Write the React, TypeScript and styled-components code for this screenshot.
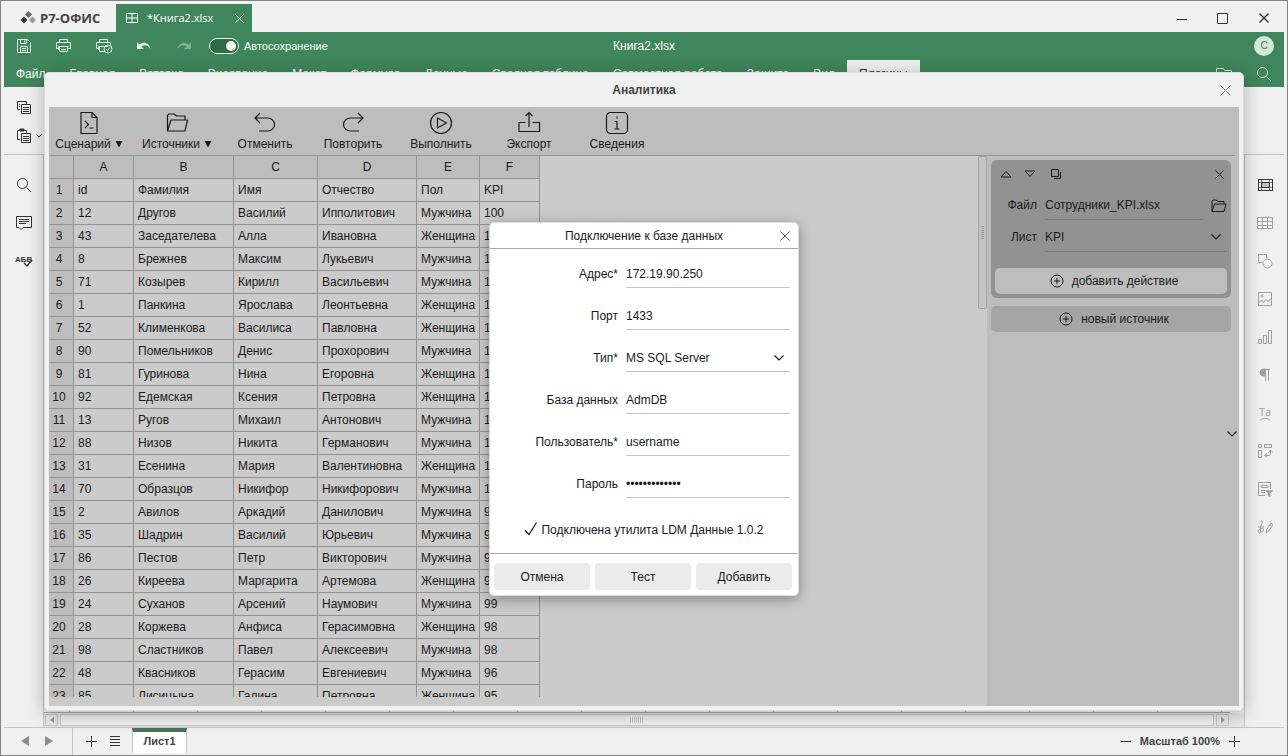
import React from "react";
import styled, { createGlobalStyle } from "styled-components";

const GlobalStyle = createGlobalStyle`
  *, *::before, *::after { box-sizing: border-box; }
  body { margin: 0; background: #f0f0f0; }
  body, button, input, select, table {
    font-family: "Liberation Sans", Arial, sans-serif;
    font-size: 12px;
    line-height: 16px;
    color: #1a1a1a;
  }
  button, input, select { margin: 0; padding: 0; border: 0; background: none; outline: none; border-radius: 0; }
  button { cursor: pointer; display: flex; align-items: center; justify-content: center; white-space: nowrap; }
  svg { display: block; flex: none; }
`;

/* ---------- window ---------- */

const Window = styled.div`
  position: relative;
  display: flex;
  flex-direction: column;
  min-height: 100vh;
  padding: 3px 3px 0;
  border: 1px solid #848484;
  background: #f0f0f0;
`;

const TitleBar = styled.header`
  display: flex;
  height: 28px;
`;

const Brand = styled.div`
  display: flex;
  align-items: center;
  gap: 3px;
  width: 112px;
  padding-left: 16px;
  font: 700 13px/20px "Open Sans", sans-serif;
  color: #444;
`;

const FileTab = styled.div`
  display: flex;
  align-items: center;
  gap: 9px;
  width: 136px;
  padding: 0 8px 0 10px;
  background: #40865c;
  color: #fff;
  font: 400 11px/16px "Open Sans", sans-serif;
  span { flex: 1; }
`;

const TabClose = styled.button`
  width: 10px;
  height: 20px;
  color: #fff;
`;

const WindowControls = styled.div`
  display: flex;
  margin-left: auto;
`;

const WindowButton = styled.button`
  width: 41px;
  height: 28px;
  color: #333;
`;

/* ---------- green header ---------- */

const Header = styled.div`
  background: #40865c;
  color: #fff;
`;

const QuickBar = styled.div`
  display: grid;
  grid-template-columns: 1fr auto 1fr;
  align-items: center;
  height: 28px;
`;

const QuickActions = styled.div`
  display: flex;
  align-items: center;
`;

const QuickButton = styled.button<{ $dim?: boolean }>`
  width: 40px;
  height: 28px;
  color: #e6f3ea;
  opacity: ${(p) => (p.$dim ? 0.4 : 1)};
`;

const AutoSave = styled.label`
  display: flex;
  align-items: center;
  gap: 5px;
  margin-left: 5px;
  font-size: 11px;
`;

const Toggle = styled.input`
  appearance: none;
  display: flex;
  justify-content: flex-end;
  align-items: center;
  width: 30px;
  height: 16px;
  padding: 0 2px;
  border: 1px solid #e6f3ea;
  border-radius: 8px;
  background: #2f6a46;
  &::after {
    content: "";
    width: 10px;
    height: 10px;
    border-radius: 50%;
    background: #eef7f0;
  }
`;

const Avatar = styled.button`
  justify-self: end;
  width: 20px;
  height: 20px;
  margin-right: 10px;
  border-radius: 50%;
  background: #d3e8da;
  color: #40765a;
  font-size: 10px;
`;

const MenuBar = styled.nav`
  display: flex;
  height: 27px;
`;

const MenuTab = styled.button<{ $active?: boolean }>`
  height: 27px;
  padding: 0 12px;
  color: ${(p) => (p.$active ? "#333" : "#fff")};
  background: ${(p) => (p.$active ? "#f0f0f0" : "transparent")};
`;

const MenuTools = styled.div`
  display: flex;
  margin-left: auto;
  button { width: 40px; color: #d3e8da; }
`;

/* ---------- editor behind the dialog ---------- */

const Ribbon = styled.div`
  display: flex;
  flex-direction: column;
  height: 68px;
  padding-top: 7px;
  border-bottom: 1px solid #c4c4c4;
`;

const RibbonButton = styled.button`
  justify-content: flex-start;
  gap: 4px;
  width: 40px;
  height: 28px;
  padding-left: 12px;
  color: #333;
`;

const Workspace = styled.div`
  display: flex;
  flex: 1;
  min-height: 0;
`;

const Rail = styled.div<{ $side: "left" | "right" }>`
  display: flex;
  flex-direction: column;
  width: 40px;
  padding-top: 11px;
  border: 0 solid #c4c4c4;
  border-width: ${(p) => (p.$side === "left" ? "0 1px 0 0" : "0 0 0 1px")};
`;

const RailButton = styled.button<{ $dim?: boolean }>`
  height: 38px;
  color: ${(p) => (p.$dim ? "#a0a0a0" : "#333")};
`;

const Canvas = styled.div`
  display: flex;
  flex: 1;
  flex-direction: column;
  min-width: 0;
`;

const Cells = styled.div`
  flex: 1;
  margin-right: 14px;
  border-bottom: 1px solid #a8a8a8;
  background: repeating-linear-gradient(to right, transparent 0 25px, #a8a8a8 25px 26px, transparent 26px 64px);
`;

const ScrollRow = styled.div`
  display: flex;
  gap: 2px;
  height: 14px;
  padding: 1px 15px 0 1px;
  background: #e8e8e8;
`;

const ScrollArrow = styled.button`
  width: 13px;
  height: 12px;
  border: 1px solid #c4c4c4;
  color: #999;
`;

const ScrollThumb = styled.div`
  display: flex;
  flex: 1;
  align-items: center;
  justify-content: center;
  height: 12px;
  border: 1px solid #c4c4c4;
  background: #f0f0f0;
`;

const StatusBar = styled.footer`
  display: flex;
  height: 28px;
  border-top: 1px solid #c4c4c4;
  color: #444;
  font-size: 11px;
  font-weight: 700;
`;

const StatusButton = styled.button<{ $muted?: boolean }>`
  width: 24px;
  height: 26px;
  color: ${(p) => (p.$muted ? "#8c8c8c" : "#333")};
`;

const SheetNav = styled.div`
  display: flex;
  width: 69px;
  padding-left: 9px;
  border-right: 1px solid #c4c4c4;
`;

const SheetTools = styled.div`
  display: flex;
  width: 59px;
  padding-left: 6px;
`;

const SheetTab = styled.button`
  width: 55px;
  height: 25px;
  padding-bottom: 4px;
  border: 1px solid #c4c4c4;
  border-top: 4px solid #4a7359;
  border-bottom: 0;
  background: #fff;
  color: #444;
  font-size: 11px;
  font-weight: 700;
`;

const Zoom = styled.div`
  display: flex;
  align-items: center;
  gap: 2px;
  height: 26px;
  margin-left: auto;
  padding-right: 38px;
`;

/* ---------- analytics dialog ---------- */

const Dialog = styled.section`
  position: absolute;
  inset: 71px 43px 44px;
  display: flex;
  flex-direction: column;
  padding: 0 4px 4px;
  border: 1px solid #dcdcdc;
  border-radius: 5px;
  background: #f0f0f0;
  box-shadow: 0 3px 18px rgba(0, 0, 0, 0.28);
`;

const DialogHeader = styled.header`
  display: grid;
  grid-template-columns: 1fr auto 1fr;
  align-items: center;
  height: 34px;
  font-size: 12px;
  color: #444;
  h1 { margin: 0; font-size: 12px; line-height: 16px; }
  button { justify-self: end; width: 28px; height: 28px; color: #888; }
`;

const DialogBody = styled.div`
  display: flex;
  flex: 1;
  flex-direction: column;
  min-height: 0;
  background: #bdbdbd;
`;

const Toolbar = styled.div`
  display: flex;
  height: 49px;
  margin-right: 4px;
  border-bottom: 1px solid #929292;
`;

const ToolButton = styled.button`
  flex-direction: column;
  justify-content: flex-start;
  gap: 1px;
  width: 88px;
  padding-top: 4px;
  &:first-child { width: 80px; margin-right: 4px; }
`;

const ToolLabel = styled.span`
  display: flex;
  align-items: center;
  gap: 4px;
`;

const Split = styled.div`
  display: flex;
  flex: 1;
  min-height: 0;
`;

const Sheet = styled.div`
  display: flex;
  flex: 1;
  justify-content: space-between;
  align-items: flex-start;
  min-width: 0;
  background: #cbcbcb;
`;

const TableClip = styled.div`
  height: calc(100% - 9px);
  overflow: hidden;
`;

const Table = styled.table`
  table-layout: fixed;
  width: 491px;
  border-collapse: separate;
  border-spacing: 0;
  th, td {
    height: 23px;
    border-right: 1px solid #929292;
    border-bottom: 1px solid #929292;
    white-space: nowrap;
  }
  th { padding: 0; background: #bdbdbd; font-weight: 400; text-align: center; }
  tbody th { padding-right: 4px; }
  td { padding: 0 4px; }
`;

const VScroll = styled.div`
  display: flex;
  align-items: center;
  justify-content: center;
  width: 9px;
  height: 153px;
  border: 1px solid #a5a5a5;
  border-radius: 2px;
  background: #c4c4c4;
`;

const SidePanel = styled.aside`
  position: relative;
  display: flex;
  flex-direction: column;
  gap: 8px;
  width: 252px;
  padding: 4px 8px 0 4px;
`;

const SourceCard = styled.div`
  padding: 0 4px 4px;
  border-radius: 6px;
  background: #929292;
`;

const CardTools = styled.div`
  display: flex;
  align-items: center;
  height: 28px;
  button { width: 26px; height: 24px; }
  button:first-child { width: 22px; }
  button:last-child { margin-left: auto; width: 16px; }
`;

const CardField = styled.div`
  display: flex;
  align-items: center;
  gap: 8px;
  height: 32px;
  label { width: 42px; padding-top: 2px; text-align: right; }
  button { width: 16px; height: 20px; padding-top: 4px; }
`;

const Underlined = styled.div<{ $line: string }>`
  position: relative;
  display: flex;
  flex: 1;
  align-items: center;
  align-self: stretch;
  min-width: 0;
  padding-top: 2px;
  border-bottom: 1px solid ${(p) => p.$line};
  input, select { appearance: none; flex: 1; width: 100%; min-width: 0; height: 20px; background: transparent; }
  svg { position: absolute; right: 6px; pointer-events: none; }
`;

const PanelButton = styled.button<{ $tone: string }>`
  gap: 8px;
  width: 100%;
  height: 26px;
  padding-left: 6px;
  border-radius: 5px;
  background: ${(p) => p.$tone};
`;

const AddAction = styled(PanelButton)`
  margin-top: 16px;
`;

const PanelToggle = styled.button`
  position: absolute;
  right: 0;
  top: calc(50% - 4px);
  width: 14px;
  height: 14px;
`;

/* ---------- connection modal ---------- */

const Modal = styled.form`
  position: absolute;
  top: 221px;
  left: 50%;
  width: 310px;
  margin-left: -155px;
  border: 1px solid #dcdcdc;
  border-radius: 5px;
  background: #fff;
  box-shadow: 0 3px 14px rgba(0, 0, 0, 0.35);
`;

const ModalHeader = styled.header`
  display: grid;
  grid-template-columns: 26px 1fr 26px;
  align-items: center;
  height: 26px;
  border-bottom: 1px solid #a8a8a8;
  text-align: center;
  h2 { margin: 0; font-size: 12px; font-weight: 400; line-height: 16px; }
  button { height: 24px; color: #555; }
`;

const Fields = styled.div`
  display: flex;
  flex-direction: column;
  gap: 13px;
  padding: 10px 8px 0;
`;

const Field = styled.div`
  display: flex;
  align-items: center;
  gap: 8px;
  height: 29px;
  label { width: 120px; text-align: right; white-space: nowrap; }
`;

const Status = styled.p`
  display: flex;
  align-items: center;
  justify-content: center;
  gap: 3px;
  height: 56px;
  margin: 0;
  padding-top: 8px;
  border-bottom: 1px solid #a8a8a8;
`;

const ModalActions = styled.div`
  display: grid;
  grid-template-columns: repeat(3, 1fr);
  gap: 5px;
  padding: 9px 6px 5px 4px;
  button { height: 27px; border-radius: 4px; background: #ebebeb; }
`;

/* ---------- icons ---------- */

type IconProps = { w?: number; h?: number; sw?: number; children: React.ReactNode };
const Icon = ({ w = 16, h = 16, sw = 1, children }: IconProps) => (
  <svg width={w} height={h} viewBox={`0 0 ${w} ${h}`} fill="none" stroke="currentColor" strokeWidth={sw} aria-hidden="true">
    {children}
  </svg>
);

const Cross = ({ size = 10, sw = 1 }: { size?: number; sw?: number }) => (
  <Icon w={size} h={size} sw={sw}>
    <path d={`M.5 .5L${size - 0.5} ${size - 0.5}M${size - 0.5} .5L.5 ${size - 0.5}`} />
  </Icon>
);
const Chevron = ({ w = 10, sw = 1.2 }: { w?: number; sw?: number }) => (
  <Icon w={w} h={6} sw={sw}>
    <path d={w > 8 ? "M.5 .5L5 5 9.500 .5" : "M.5 1.500L3 4 5.500 1.500"} />
  </Icon>
);
const Magnifier = () => (
  <Icon>
    <circle cx="6.5" cy="6.5" r="5" />
    <path d="M10.500 10.500L15 15" />
  </Icon>
);
const PlusCircle = () => (
  <Icon w={14} h={14}>
    <circle cx="7" cy="7" r="6" />
    <path d="M4 7h6M7 4v6" />
  </Icon>
);
const Triangle = () => (
  <svg width="8" height="7" viewBox="0 0 8 7" aria-hidden="true">
    <path d="M0.500 0H7.500L4 6.500Z" fill="currentColor" />
  </svg>
);
const Printer = ({ checked }: { checked?: boolean }) => (
  <Icon w={18} h={16}>
    <path d="M4.500 4V1.500h8V4M3.500 10.500H1.500V4.500h14v3M3.500 12V8.500h10M4.500 8.500v5h5" />
    {checked ? (
      <>
        <circle cx="13" cy="11" r="4" />
        <path d="M11 11l1.500 1.500L15 9.500" />
      </>
    ) : (
      <path d="M9 13.500h3.500v-5M15.500 7v3.500h-2M6 11.500h5" />
    )}
  </Icon>
);

/* ---------- data ---------- */

const menu = ["Файл", "Главная", "Вставка", "Рисование", "Макет", "Формула", "Данные", "Сводная таблица", "Совместная работа", "Защита", "Вид"];

const columns = [
  { name: "", width: 25 },
  { name: "A", width: 60 },
  { name: "B", width: 100 },
  { name: "C", width: 84 },
  { name: "D", width: 99 },
  { name: "E", width: 63 },
  { name: "F", width: 60 },
];

const rows = [
  "id|Фамилия|Имя|Отчество|Пол|KPI",
  "12|Другов|Василий|Ипполитович|Мужчина|100",
  "43|Заседателева|Алла|Ивановна|Женщина|100",
  "8|Брежнев|Максим|Лукьевич|Мужчина|100",
  "71|Козырев|Кирилл|Васильевич|Мужчина|100",
  "1|Панкина|Ярослава|Леонтьевна|Женщина|100",
  "52|Клименкова|Василиса|Павловна|Женщина|100",
  "90|Помельников|Денис|Прохорович|Мужчина|100",
  "81|Гуринова|Нина|Егоровна|Женщина|100",
  "92|Едемская|Ксения|Петровна|Женщина|100",
  "13|Ругов|Михаил|Антонович|Мужчина|100",
  "88|Низов|Никита|Германович|Мужчина|100",
  "31|Есенина|Мария|Валентиновна|Женщина|100",
  "70|Образцов|Никифор|Никифорович|Мужчина|100",
  "2|Авилов|Аркадий|Данилович|Мужчина|99",
  "35|Шадрин|Василий|Юрьевич|Мужчина|99",
  "86|Пестов|Петр|Викторович|Мужчина|99",
  "26|Киреева|Маргарита|Артемова|Женщина|99",
  "24|Суханов|Арсений|Наумович|Мужчина|99",
  "28|Коржева|Анфиса|Герасимовна|Женщина|98",
  "98|Сластников|Павел|Алексеевич|Мужчина|98",
  "48|Квасников|Герасим|Евгениевич|Мужчина|96",
  "85|Лисицына|Галина|Петровна|Женщина|95",
].map((r) => r.split("|"));

const tools = [
  {
    label: "Сценарий",
    menu: true,
    icon: (
      <Icon w={24} h={24} sw={1.2}>
        <path d="M4 1.500h11l5 5v16H4zM15 1.500v5h5M8 10l3.500 3.500L8 17M12.500 17h4" />
      </Icon>
    ),
  },
  {
    label: "Источники",
    menu: true,
    icon: (
      <Icon w={24} h={24} sw={1.2}>
        <path d="M2.500 20V4.500L4 3h5l2.500 2H20v4M2.500 20L6 9h16.500L20 20z" strokeLinejoin="round" />
      </Icon>
    ),
  },
  {
    label: "Отменить",
    icon: (
      <Icon w={24} h={24} sw={1.2}>
        <path d="M7 2L2 7l5 5M2 7h12.500a7 6.500 0 0 1 0 13H6" />
      </Icon>
    ),
  },
  {
    label: "Повторить",
    icon: (
      <Icon w={24} h={24} sw={1.2}>
        <path d="M17 2l5 5-5 5M22 7H9.500a7 6.500 0 0 0 0 13H18" />
      </Icon>
    ),
  },
  {
    label: "Выполнить",
    icon: (
      <Icon w={24} h={24} sw={1.2}>
        <circle cx="12" cy="12" r="10.500" />
        <path d="M8.500 7v10l9-5z" strokeLinejoin="round" />
      </Icon>
    ),
  },
  {
    label: "Экспорт",
    icon: (
      <Icon w={24} h={24} sw={1.2}>
        <path d="M8.500 11.500h-6.500v9h20.500v-9h-7M12 16V2M8.500 5L12 1.500 15.500 5" />
      </Icon>
    ),
  },
  {
    label: "Сведения",
    icon: (
      <Icon w={24} h={24} sw={1.2}>
        <rect x="1.500" y="1.500" width="21" height="21" rx="4" />
        <path d="M12 5.500v2M9.500 10.500H12V18M9.500 18h5" />
      </Icon>
    ),
  },
];

const sideTools: { name: string; active?: boolean; icon: React.ReactNode }[] = [
  { name: "Параметры ячейки", active: true, icon: <><path d="M1.500 2.500h14v11h-14zM4.500 2.500v11M12.500 2.500v11M1.500 5.500h14M1.500 10.500h14" strokeOpacity="0.6" /><path d="M1.500 2.500h14v11h-14z" /><rect x="4.500" y="5.500" width="8" height="5" fill="#bdbdbd" /></> },
  { name: "Таблица", icon: <path d="M.5 2.500h15v11H.5zM.5 6.500h15M.5 10.500h15M5.500 2.500v11M10.500 2.500v11" /> },
  { name: "Фигура", icon: <><path d="M5 9.500H1.500v-8h8V5" /><circle cx="10.500" cy="10.500" r="4.500" /></> },
  { name: "Изображение", icon: <><path d="M1.500 1.500h13v13h-13zM1.500 12l3-3 2 2.500 2.500-3 2 2 3.500-3.500" /><circle cx="5" cy="5" r="1" /></> },
  { name: "Диаграмма", icon: <path d="M1.500 10.500h3v4h-3zM6.500 6.500h3v8h-3zM11.500 1.500h3v13h-3z" /> },
  { name: "Абзац", icon: <><path d="M8.500 2v12M11.500 2v12M6 2.500h7" /><path d="M8.500 2H6.500a3.500 3.500 0 0 0 0 7h2z" fill="currentColor" /></> },
  { name: "Текст", icon: <><text x="8" y="11" textAnchor="middle" fontSize="11" fontFamily="Open Sans, sans-serif" fill="currentColor" stroke="none">Ta</text><path d="M3 15.500c3-3 7-3 10 0" /></> },
  { name: "Сводная таблица", icon: <><path d="M1.500 1.500h3v3h-3zM7.500 1.500h7v3h-7zM1.500 7.500h3v7h-3z" /><path d="M8 12.500h3.500a2 2 0 0 0 2-2V8M10 10.500l-2.500 2L10 14.500M11.500 9.500l2-2.500 2 2.500" /></> },
  { name: "Срез", icon: <><path d="M8 14.500H1.500v-13h12V8M4 4.500h7v2H4zM4 9.500h4M4 11.500h4" /><path d="M8 9.500h8l-3 3v3.500l-2-1.500v-2z" fill="currentColor" strokeWidth="0.5" /></> },
  { name: "Подпись", icon: <path d="M3.500 2.500c2-2 2.500 1 0 5v5c0 3-3 1-2-1s5-3 5-1-2 4-2 2M1 8h6M9 14l1-4 4-6 2 1.500-4 6zM12.500 6l2 1.500" /> },
];

const connection = [
  { id: "address", label: "Адрес*", value: "172.19.90.250" },
  { id: "port", label: "Порт", value: "1433" },
  { id: "type", label: "Тип*", value: "MS SQL Server", select: true },
  { id: "database", label: "База данных", value: "AdmDB" },
  { id: "user", label: "Пользователь*", value: "username" },
  { id: "password", label: "Пароль", value: "password12345", secret: true },
];

/* ---------- page ---------- */

export default function App() {
  return (
    <>
      <GlobalStyle />
      <Window>
        <TitleBar>
          <Brand>
            <svg width="17" height="14" viewBox="0 0 17 14" aria-hidden="true">
              <path d="M8.500 0L12 3.500 8.500 7 5 3.500z" fill="#666" />
              <path d="M4 5.500L7.500 9 4 12.500.5 9z" fill="#333" />
              <path d="M12.500 5.500L16 9l-3.500 3.500L9 9z" fill="#999" />
            </svg>
            Р7-ОФИС
          </Brand>
          <FileTab>
            <Icon w={12} h={10} sw={1}>
              <path d="M.5 .5h11v9H.5zM6 .5v9M.5 5h11" />
            </Icon>
            <span>*Книга2.xlsx</span>
            <TabClose aria-label="Закрыть вкладку"><Cross size={9} /></TabClose>
          </FileTab>
          <WindowControls>
            <WindowButton aria-label="Свернуть"><Icon w={10} h={10}><path d="M0 6.500h10" /></Icon></WindowButton>
            <WindowButton aria-label="Развернуть"><Icon w={11} h={11}><path d="M.5 .5h10v10H.5z" /></Icon></WindowButton>
            <WindowButton aria-label="Закрыть"><Cross sw={1.4} /></WindowButton>
          </WindowControls>
        </TitleBar>

        <Header>
          <QuickBar>
            <QuickActions>
              <QuickButton aria-label="Сохранить">
                <Icon w={14} h={14}><path d="M.5 .5h10l3 3v10H.5zM3.500 .5v4h6v-4M3.500 13.500v-6h7v6M5 9.500h4M5 11.500h4M7.500 1.500v2" /></Icon>
              </QuickButton>
              <QuickButton aria-label="Печать"><Printer /></QuickButton>
              <QuickButton aria-label="Быстрая печать"><Printer checked /></QuickButton>
              <QuickButton aria-label="Отменить">
                <Icon w={16} h={12}><path d="M1 2v7h7L5.500 6.500C8 4.500 12 5 14.500 9 13.500 3 7.500 1 3.500 4.500z" fill="currentColor" stroke="none" /></Icon>
              </QuickButton>
              <QuickButton aria-label="Повторить" $dim>
                <Icon w={16} h={12}><path d="M15 2v7H8l2.500-2.500C8 4.500 4 5 1.500 9 2.500 3 8.500 1 12.500 4.500z" fill="currentColor" stroke="none" /></Icon>
              </QuickButton>
              <AutoSave>
                <Toggle type="checkbox" role="switch" defaultChecked />
                Автосохранение
              </AutoSave>
            </QuickActions>
            <span>Книга2.xlsx</span>
            <Avatar aria-label="Пользователь">C</Avatar>
          </QuickBar>
          <MenuBar>
            {menu.map((m) => <MenuTab key={m}>{m}</MenuTab>)}
            <MenuTab $active>Плагины</MenuTab>
            <MenuTools>
              <button aria-label="Открыть расположение файла"><Icon><path d="M.5 14V2.500h7l1 2h7V14z" /></Icon></button>
              <button aria-label="Найти"><Magnifier /></button>
            </MenuTools>
          </MenuBar>
        </Header>

        <Ribbon>
          <RibbonButton aria-label="Копировать">
            <Icon><path d="M4 9.500H1.500v-8h9V4M3 4.500h1M3 6.500h1M5.500 4.500h9v9h-9zM7 7.500h6M7 9.500h6M7 11.500h6" /></Icon>
          </RibbonButton>
          <RibbonButton aria-label="Вставить">
            <Icon><path d="M4 11.500H1.500v-9h9V5M5.500 5.500h9v9h-9zM7 8.500h6M7 10.500h6M7 12.500h6" /><path d="M4 1h4v2H4z" fill="currentColor" /></Icon>
            <Chevron w={6} sw={1} />
          </RibbonButton>
        </Ribbon>

        <Workspace>
          <Rail $side="left">
            <RailButton aria-label="Поиск"><Magnifier /></RailButton>
            <RailButton aria-label="Комментарии">
              <Icon><path d="M.5 1.500h15v11H7l-2 2-2-2H.5zM3 4.500h10M3 6.500h10M3 8.500h7" /></Icon>
            </RailButton>
            <RailButton aria-label="Проверка орфографии">
              <Icon w={18} h={16} sw={1.5}>
                <text x="0" y="9" fontSize="8" fontWeight="700" fontFamily="Liberation Sans, sans-serif" fill="currentColor" stroke="none">АБВ</text>
                <path d="M9 10l3 3 5-6" />
              </Icon>
            </RailButton>
          </Rail>
          <Canvas>
            <Cells />
            <ScrollRow>
              <ScrollArrow aria-label="Прокрутить влево"><Icon w={4} h={6}><path d="M4 0v6L0 3z" fill="currentColor" stroke="none" /></Icon></ScrollArrow>
              <ScrollThumb><Icon w={14} h={6}><path d="M.5 0v6M2.500 0v6M4.500 0v6M6.500 0v6M8.500 0v6M10.500 0v6M12.500 0v6" stroke="#c4c4c4" /></Icon></ScrollThumb>
              <ScrollArrow aria-label="Прокрутить вправо"><Icon w={4} h={6}><path d="M0 0v6l4-3z" fill="currentColor" stroke="none" /></Icon></ScrollArrow>
            </ScrollRow>
          </Canvas>
          <Rail $side="right">
            {sideTools.map((t) => (
              <RailButton key={t.name} aria-label={t.name} $dim={!t.active}><Icon>{t.icon}</Icon></RailButton>
            ))}
          </Rail>
        </Workspace>

        <StatusBar>
          <SheetNav>
            <StatusButton $muted aria-label="Предыдущий лист"><Icon w={8} h={10}><path d="M8 0v10L0 5z" fill="currentColor" stroke="none" /></Icon></StatusButton>
            <StatusButton $muted aria-label="Следующий лист"><Icon w={8} h={10}><path d="M0 0v10l8-5z" fill="currentColor" stroke="none" /></Icon></StatusButton>
          </SheetNav>
          <SheetTools>
            <StatusButton aria-label="Добавить лист"><Icon w={11} h={11}><path d="M5.500 0v11M0 5.500h11" /></Icon></StatusButton>
            <StatusButton aria-label="Список листов"><Icon w={10} h={11}><path d="M0 .5h10M0 3.500h10M0 6.500h10M0 9.500h10" /></Icon></StatusButton>
          </SheetTools>
          <SheetTab>Лист1</SheetTab>
          <Zoom>
            <StatusButton aria-label="Уменьшить"><Icon w={10} h={11}><path d="M0 5.500h10" /></Icon></StatusButton>
            Масштаб 100%
            <StatusButton aria-label="Увеличить"><Icon w={11} h={11}><path d="M5.500 0v11M0 5.500h11" /></Icon></StatusButton>
          </Zoom>
        </StatusBar>

        <Dialog aria-label="Аналитика">
          <DialogHeader>
            <span />
            <h1>Аналитика</h1>
            <button aria-label="Закрыть"><Cross size={11} /></button>
          </DialogHeader>
          <DialogBody>
            <Toolbar>
              {tools.map((t) => (
                <ToolButton key={t.label}>
                  {t.icon}
                  <ToolLabel>{t.label}{t.menu && <Triangle />}</ToolLabel>
                </ToolButton>
              ))}
            </Toolbar>
            <Split>
              <Sheet>
                <TableClip>
                  <Table>
                    <colgroup>
                      {columns.map((c) => <col key={c.name} width={c.width} />)}
                    </colgroup>
                    <thead>
                      <tr>{columns.map((c) => <th key={c.name} scope="col">{c.name}</th>)}</tr>
                    </thead>
                    <tbody>
                      {rows.map((row, i) => (
                        <tr key={i}>
                          <th scope="row">{i + 1}</th>
                          {row.map((cell, j) => <td key={j}>{cell}</td>)}
                        </tr>
                      ))}
                    </tbody>
                  </Table>
                </TableClip>
                <VScroll>
                  <Icon w={3} h={14}><path d="M0 .5h3M0 2.500h3M0 4.500h3M0 6.500h3M0 8.500h3M0 10.500h3M0 12.500h3" stroke="#999" /></Icon>
                </VScroll>
              </Sheet>
              <SidePanel>
                <SourceCard>
                  <CardTools>
                    <button aria-label="Вверх"><Icon w={12} h={8}><path d="M1 7L6 1.500 11 7z" /></Icon></button>
                    <button aria-label="Вниз"><Icon w={12} h={8}><path d="M1 1l5 5.500L11 1z" /></Icon></button>
                    <button aria-label="Дублировать"><Icon w={11} h={10}><path d="M.5 .5h7v7h-7zM3 9.500h6.500V3" /></Icon></button>
                    <button aria-label="Удалить"><Cross size={9} /></button>
                  </CardTools>
                  <CardField>
                    <label htmlFor="source-file">Файл</label>
                    <Underlined $line="#7c7c7c"><input id="source-file" defaultValue="Сотрудники_KPI.xlsx" /></Underlined>
                    <button aria-label="Выбрать файл">
                      <Icon w={16} h={14}><path d="M1 12.500V2.500L2 1h3l2 1.500h6V5M1 12.500L3.500 5H15l-2 7.500z" strokeLinejoin="round" /></Icon>
                    </button>
                  </CardField>
                  <CardField>
                    <label htmlFor="source-sheet">Лист</label>
                    <Underlined $line="#7c7c7c">
                      <select id="source-sheet" defaultValue="KPI"><option>KPI</option></select>
                      <Chevron />
                    </Underlined>
                  </CardField>
                  <AddAction $tone="#bdbdbd"><PlusCircle />добавить действие</AddAction>
                </SourceCard>
                <PanelButton $tone="#a5a5a5"><PlusCircle />новый источник</PanelButton>
                <PanelToggle aria-label="Свернуть панель"><Chevron /></PanelToggle>
              </SidePanel>
            </Split>
          </DialogBody>
        </Dialog>

        <Modal aria-label="Подключение к базе данных" onSubmit={(e) => e.preventDefault()}>
          <ModalHeader>
            <span />
            <h2>Подключение к базе данных</h2>
            <button type="button" aria-label="Закрыть"><Cross size={10} /></button>
          </ModalHeader>
          <Fields>
            {connection.map((f) => (
              <Field key={f.id}>
                <label htmlFor={f.id}>{f.label}</label>
                <Underlined $line="#c4c4c4">
                  {f.select ? (
                    <>
                      <select id={f.id} defaultValue={f.value}><option>{f.value}</option></select>
                      <Chevron />
                    </>
                  ) : (
                    <input id={f.id} type={f.secret ? "password" : "text"} defaultValue={f.value} />
                  )}
                </Underlined>
              </Field>
            ))}
          </Fields>
          <Status>
            <Icon w={14} h={16} sw={1.2}><path d="M1 8.500L5 12.500 12.500 .5" /></Icon>
            Подключена утилита LDM Данные 1.0.2
          </Status>
          <ModalActions>
            <button type="button">Отмена</button>
            <button type="button">Тест</button>
            <button type="submit">Добавить</button>
          </ModalActions>
        </Modal>
      </Window>
    </>
  );
}
